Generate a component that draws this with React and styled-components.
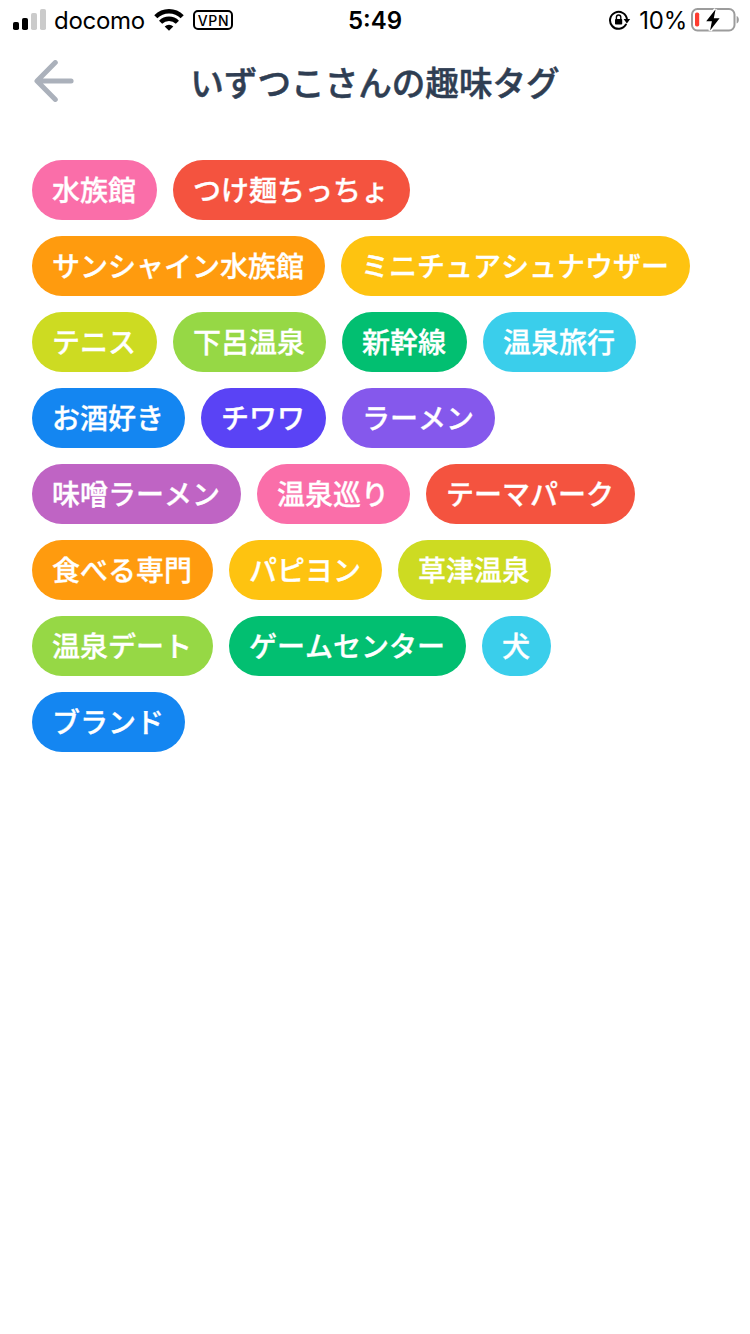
import React from "react";
import styled, { createGlobalStyle } from "styled-components";

const tags = [
  { name: "水族館", color: "#fa6ea9" },
  { name: "つけ麺ちっちょ", color: "#f4533f" },
  { name: "サンシャイン水族館", color: "#ff9b0e" },
  { name: "ミニチュアシュナウザー", color: "#fec310" },
  { name: "テニス", color: "#cddb22" },
  { name: "下呂温泉", color: "#96d845" },
  { name: "新幹線", color: "#02bf71" },
  { name: "温泉旅行", color: "#3aceeb" },
  { name: "お酒好き", color: "#1486f1" },
  { name: "チワワ", color: "#5a43f5" },
  { name: "ラーメン", color: "#8558ec" },
  { name: "味噌ラーメン", color: "#bf64c4" },
  { name: "温泉巡り", color: "#fa6ea9" },
  { name: "テーマパーク", color: "#f4533f" },
  { name: "食べる専門", color: "#ff9b0e" },
  { name: "パピヨン", color: "#fec310" },
  { name: "草津温泉", color: "#cddb22" },
  { name: "温泉デート", color: "#96d845" },
  { name: "ゲームセンター", color: "#02bf71" },
  { name: "犬", color: "#3aceeb" },
  { name: "ブランド", color: "#1486f1" },
];

//Icons
const SignalIcon = () => (
  <svg width="34" height="22" viewBox="0 0 34 22">
    <rect x="0" y="13" width="6" height="8" rx="1.8" fill="#000" />
    <rect x="9" y="9" width="6" height="12" rx="1.8" fill="#000" />
    <rect x="18" y="4" width="6" height="17" rx="1.8" fill="#cbcbcb" />
    <rect x="27" y="0" width="6" height="21" rx="1.8" fill="#cbcbcb" />
  </svg>
);

const WifiIcon = () => (
  <svg width="30" height="22" viewBox="0 0 30 22">
    <g fill="none" stroke="#000" strokeWidth="4.4">
      <path d="M1.8 7.7a18.700 18.700 0 0 1 26.400 0" />
      <path d="M6.6 13.200a11.800 11.800 0 0 1 16.800 0" />
    </g>
    <path d="M10.700 17.400a6.500 6.500 0 0 1 8.600 0L15 21.800z" fill="#000" />
  </svg>
);

const RotationLockIcon = () => (
  <svg width="22" height="20" viewBox="0 0 22 20">
    <path
      d="M16.9 14.6A8.5 8.5 0 1 1 18 9.5"
      fill="none"
      stroke="#000"
      strokeWidth="2"
      strokeLinecap="round"
    />
    <path d="M14.6 9h6.6l-3.3 4.4z" fill="#000" />
    <rect x="6" y="9" width="7.2" height="5.6" rx="0.8" fill="#000" />
    <path
      d="M7.4 9.4V7.2a2.2 2.2 0 0 1 4.4 0v2.2"
      fill="none"
      stroke="#000"
      strokeWidth="1.4"
    />
  </svg>
);

const BatteryIcon = () => (
  <svg width="48" height="24" viewBox="0 0 48 24">
    <rect
      x="1"
      y="1"
      width="42.5"
      height="21.5"
      rx="5.5"
      fill="none"
      stroke="#9c9c9c"
      strokeWidth="2"
    />
    <path d="M45.6 8c3 1.2 3 6.4 0 7.6z" fill="#9c9c9c" />
    <rect x="4" y="4.5" width="4.2" height="14" rx="1.8" fill="#fe3c30" />
    <path
      d="M24.6 1.3 15.2 13.3h5.700l-1.800 9.200L28.600 10.300h-5.800z"
      fill="#000"
      stroke="#fff"
      strokeWidth="3.6"
      paintOrder="stroke"
    />
  </svg>
);

const BackIcon = () => (
  <svg width="40" height="42" viewBox="0 0 40 42">
    <path
      d="M21.3 2.6 3 21l18.3 18.4M3.5 21h33.6"
      fill="none"
      stroke="#abb1bb"
      strokeWidth="5"
      strokeLinecap="round"
      strokeLinejoin="round"
    />
  </svg>
);

const App = () => {
  return (
    <>
      <GlobalStyle />
      <Screen>
        <StatusBar>
          <Carrier>
            <SignalIcon />
            <CarrierName>docomo</CarrierName>
            <WifiIcon />
            <Vpn>VPN</Vpn>
          </Carrier>
          <Clock>5:49</Clock>
          <Power>
            <RotationLockIcon />
            <Percent>10%</Percent>
            <BatteryIcon />
          </Power>
        </StatusBar>
        <Header>
          <BackButton aria-label="戻る">
            <BackIcon />
          </BackButton>
          <Title>いずつこさんの趣味タグ</Title>
        </Header>
        <TagList>
          {tags.map((tag) => (
            <Tag key={tag.name} $color={tag.color}>
              {tag.name}
            </Tag>
          ))}
        </TagList>
      </Screen>
    </>
  );
};

const GlobalStyle = createGlobalStyle`
  * {
    margin: 0;
    padding: 0;
    box-sizing: border-box;
  }
  body {
    background: white;
    font-family: "Noto Sans CJK JP", sans-serif;
  }
  svg {
    display: block;
    flex-shrink: 0;
  }
`;

const Screen = styled.div`
  width: 750px;
  min-height: 1334px;
  background: white;
`;

const StatusBar = styled.div`
  display: grid;
  grid-template-columns: 1fr auto 1fr;
  align-items: center;
  height: 40px;
  padding: 0 11px 0 13px;
  color: black;
  font-family: Inter, sans-serif;
`;

const Carrier = styled.div`
  display: flex;
  align-items: center;
`;

const CarrierName = styled.span`
  width: 92px;
  margin: 2px 8px 0 7px;
  font-size: 24px;
  line-height: 30px;
  letter-spacing: -0.3px;
`;

const Vpn = styled.span`
  width: 40px;
  height: 20px;
  margin-left: 9px;
  padding-left: 1px;
  border: 2px solid black;
  border-radius: 5px;
  font-size: 14px;
  font-weight: 500;
  line-height: 17px;
  letter-spacing: 0.7px;
  text-align: center;
`;

const Clock = styled.span`
  margin: 2px 2px 0 0;
  font-size: 24px;
  font-weight: 600;
  line-height: 30px;
`;

const Power = styled.div`
  display: flex;
  align-items: center;
  justify-content: flex-end;
`;

const Percent = styled.span`
  margin: 2px 4px 0 8px;
  font-size: 24px;
  line-height: 30px;
  letter-spacing: -0.2px;
`;

const Header = styled.header`
  display: grid;
  grid-template-columns: 74px 1fr 74px;
  align-items: center;
  height: 84px;
`;

const BackButton = styled.button`
  height: 42px;
  margin-bottom: 2px;
  padding-left: 34px;
  border: none;
  background: none;
`;

const Title = styled.h1`
  color: #2f3e53;
  font-size: 33.6px;
  font-weight: 500;
  font-kerning: none;
  line-height: 50px;
  text-align: center;
  -webkit-text-stroke: 0.5px #2f3e53;
`;

const TagList = styled.div`
  display: flex;
  flex-wrap: wrap;
  gap: 16px;
  padding: 36px 32px;
`;

const Tag = styled.span`
  height: 60px;
  padding: 0 21px 0 20px;
  border-radius: 30px;
  background: ${({ $color }) => $color};
  color: white;
  font-size: 28px;
  font-weight: 500;
  font-kerning: none;
  line-height: 59px;
  -webkit-text-stroke: 0.3px white;
`;

export default App;
